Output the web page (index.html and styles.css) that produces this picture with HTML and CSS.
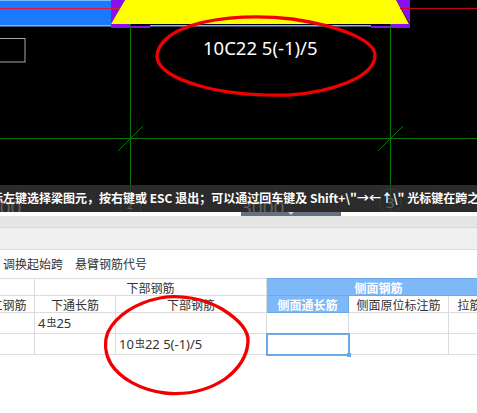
FILE: index.html
```html
<!DOCTYPE html>
<html lang="zh">
<head>
<meta charset="utf-8">
<title>梁平法表格</title>
<link rel="stylesheet" href="styles.css">
</head>
<body>
<div class="page">
  <section class="canvas">
    <svg class="drawing" width="477" height="212" viewBox="0 0 477 212">
      <rect x="0" y="0" width="111" height="26" fill="#1a7aff"/>
      <rect x="0" y="0" width="111" height="1" fill="#7fb8ff"/>
      <rect x="0" y="25" width="111" height="1.5" fill="#7fb8ff"/>
      <rect x="111" y="24" width="19" height="4" fill="#8b10f0"/>
      <rect x="130" y="26" width="20" height="2" fill="#8b10f0"/>
      <rect x="371" y="26" width="20" height="2" fill="#8b10f0"/>
      <rect x="390" y="24" width="20" height="4" fill="#8b10f0"/>
      <polygon points="111,0 125,0 111,24" fill="#8b10f0"/>
      <polygon points="396,0 410,0 410,24" fill="#8b10f0"/>
      <rect x="150" y="25" width="221" height="1.5" fill="#7fb8ff"/>
      <polygon points="125,0 396,0 409,24 111,24" fill="#ffff00"/>
      <line x1="0" y1="8.5" x2="120" y2="8.5" stroke="#e8173c" stroke-width="1"/>
      <line x1="400" y1="8.5" x2="477" y2="8.5" stroke="#c80010" stroke-width="1"/>
      <rect x="-2" y="38.5" width="27" height="23.5" fill="none" stroke="#a8a8a8" stroke-width="1"/>
      <g stroke="#0a760a" stroke-width="1" fill="none">
        <line x1="130.5" y1="24" x2="130.5" y2="212"/>
        <line x1="390.5" y1="24" x2="390.5" y2="212"/>
        <line x1="0" y1="138.5" x2="477" y2="138.5"/>
        <line x1="118" y1="151" x2="143" y2="126"/>
        <line x1="378" y1="151" x2="403" y2="126"/>
        <polygon points="125,195 136,195 141,200 141,211 136,216 125,216 120,211 120,200"/>
        <polygon points="385,189 396,189 401,195 401,206 396,212 385,212 380,206 380,195"/>
      </g>
    </svg>
    <div class="note">10C22 5(-1)/5</div>
    <div class="dim dim-a">3000</div>
    <div class="dim dim-b">3000</div>
    <div class="axis axis-a">2</div>
    <div class="axis axis-b">3</div>
    <div class="status">按鼠标左键选择梁图元&#xFF0C;按右键或 ESC 退出&#xFF1B;可以通过回车键及 Shift+\"→←↑\" 光标键在跨之间切换</div>
  </section>
  <div class="splitter"><div class="handle"><span class="handle-arrow"></span></div></div>
  <div class="tabbar"></div>
  <div class="ribbon"></div>
  <div class="toolbar"><span>调换起始跨</span><span>悬臂钢筋代号</span></div>
  <table class="grid">
    <colgroup>
      <col class="c1"><col class="c2"><col class="c3"><col class="c4"><col class="c5"><col class="c6">
    </colgroup>
    <tr class="head">
      <td></td>
      <td colspan="2">下部钢筋</td>
      <td colspan="3" class="active-head">侧面钢筋</td>
    </tr>
    <tr class="head">
      <td>架立钢筋</td>
      <td>下通长筋</td>
      <td>下部钢筋</td>
      <td class="active-head">侧面通长筋</td>
      <td>侧面原位标注筋</td>
      <td>拉筋</td>
    </tr>
    <tr class="body">
      <td></td><td>4<span class="bar">虫</span>25</td><td></td><td></td><td></td><td></td>
    </tr>
    <tr class="body">
      <td></td><td></td><td>10<span class="bar">虫</span>22 5(-1)/5</td><td class="selected"><span class="fill-handle"></span></td><td></td><td></td>
    </tr>
  </table>
  <svg class="marks" width="477" height="413" viewBox="0 0 477 413">
    <path d="M375 55 C374 40 340 26 292 19 C250 14 205 18 180 30 C165 37 157 47 157 57 C158 68 172 78 200 86 C225 93 255 96 290 95 C330 92 375 78 375 55 Z" />
    <path d="M160 298 C180 294 205 299 222 309 C238 319 249 331 248 342 C247 356 240 368 225 379 C207 391 185 395 165 393 C140 390 120 378 111 364 C105 354 104 342 108 332 C116 316 135 303 160 298 Z" />
  </svg>
</div>
</body>
</html>
```
FILE: styles.css
```css
* { box-sizing: border-box; }
html, body { margin: 0; padding: 0; background: #fff; }
body { width: 477px; height: 413px; overflow: hidden; font-family: "Noto Sans CJK SC", "Noto Sans", sans-serif; }
.page { position: relative; width: 477px; height: 413px; overflow: hidden; }

.canvas { position: relative; height: 212px; background: #000; overflow: hidden; }
.drawing { display: block; }
.note { position: absolute; left: 203px; top: 36px; color: #fff; font: 18.5px/24px "Noto Sans", sans-serif; white-space: nowrap; }
.dim { position: absolute; top: 195px; color: #fff; font: 19px/26px "Noto Sans", sans-serif; }
.dim-a { left: -22px; }
.dim-b { left: 241px; }
.axis { position: absolute; color: #fff; font-family: "Noto Sans", sans-serif; }
.axis-a { left: 127px; top: 198px; font-size: 11px; line-height: 14px; }
.axis-b { left: 386px; top: 192px; font-size: 15px; line-height: 20px; }
.status { position: absolute; left: 0; right: 0; top: 185px; height: 27px; background: rgba(54, 54, 54, 0.8); color: #fff; font-size: 12px; font-weight: 700; line-height: 26px; white-space: nowrap; overflow: hidden; text-indent: -33px; }

.splitter { height: 4px; background: #fff; }
.handle { width: 100px; height: 4px; margin-left: 241px; background: #67707f; display: flex; justify-content: center; }
.handle-arrow { width: 0; height: 0; border: 3px solid transparent; border-top-color: #c9ccd2; border-bottom: 0; }
.tabbar { height: 12px; background: #e5e5e5; border-bottom: 1px solid #d8d8d8; }
.ribbon { height: 22px; background: #f0f0f0; border-bottom: 1px solid #dcdcdc; }
.toolbar { height: 28px; padding: 0 0 2px 3px; display: flex; gap: 12px; align-items: center; font-size: 12px; color: #333; background: #fff; }

.grid { table-layout: fixed; border-collapse: collapse; width: 520px; margin-left: -30px; font-size: 12px; color: #333; }
.c1 { width: 64px; }
.c2 { width: 81px; }
.c3 { width: 151px; }
.c4 { width: 82px; }
.c5 { width: 100px; }
.c6 { width: 42px; }
.grid td { border: 1px solid #dcdcdc; padding: 0 3px; white-space: nowrap; overflow: hidden; }
.head td { height: 17px; line-height: 15px; text-align: center; }
.body td { height: 21px; line-height: 19px; text-align: left; font-family: "Noto Sans", "Noto Sans CJK SC", sans-serif; font-size: 13px; }
.bar { font-family: "Noto Sans CJK SC", sans-serif; font-size: 10px; position: relative; top: -2px; margin-left: 1px; }
.grid .active-head { background: #7fb8f8; color: #fff; font-weight: 700; border-color: #6aa8e8; }
.grid .selected { position: relative; border: 2px solid #6aa8e8; overflow: visible; }
.fill-handle { position: absolute; right: -3px; bottom: -3px; width: 4px; height: 4px; background: #6aa8e8; }

.marks { position: absolute; left: 0; top: 0; pointer-events: none; }
.marks path { fill: none; stroke: #f00000; stroke-width: 3.3; stroke-linecap: round; }
```
